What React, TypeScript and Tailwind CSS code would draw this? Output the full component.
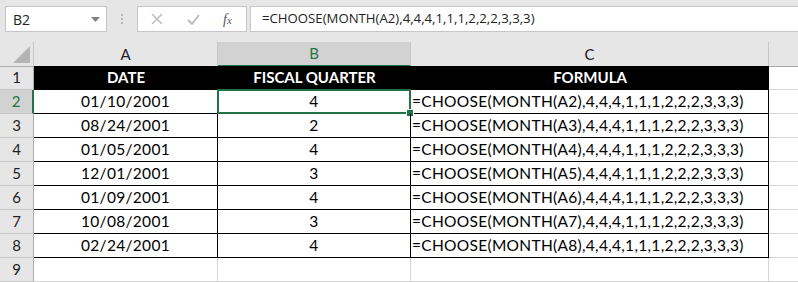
import React from "react";

const rows = [
  { date: "01/10/2001", q: "4", f: "=CHOOSE(MONTH(A2),4,4,4,1,1,1,2,2,2,3,3,3)" },
  { date: "08/24/2001", q: "2", f: "=CHOOSE(MONTH(A3),4,4,4,1,1,1,2,2,2,3,3,3)" },
  { date: "01/05/2001", q: "4", f: "=CHOOSE(MONTH(A4),4,4,4,1,1,1,2,2,2,3,3,3)" },
  { date: "12/01/2001", q: "3", f: "=CHOOSE(MONTH(A5),4,4,4,1,1,1,2,2,2,3,3,3)" },
  { date: "01/09/2001", q: "4", f: "=CHOOSE(MONTH(A6),4,4,4,1,1,1,2,2,2,3,3,3)" },
  { date: "10/08/2001", q: "3", f: "=CHOOSE(MONTH(A7),4,4,4,1,1,1,2,2,2,3,3,3)" },
  { date: "02/24/2001", q: "4", f: "=CHOOSE(MONTH(A8),4,4,4,1,1,1,2,2,2,3,3,3)" },
];

const cols = "grid grid-cols-[34px_184px_193px_358px_1fr]";
const font = { fontFamily: "Lato, 'Open Sans', sans-serif" };

function RowHead({ n, active }: { n: number; active?: boolean }) {
  return (
    <div
      className={
        active
          ? "flex items-center justify-center bg-[#d2d2d2] border-r-2 border-r-[#217346] border-b border-b-[#c6c6c6] text-[#217346] text-[15px] tracking-normal"
          : "flex items-center justify-center bg-[#e6e6e6] border-r border-r-[#ababab] border-b border-b-[#c6c6c6] text-[#222] text-[15px] tracking-normal"
      }
    >
      {n}
    </div>
  );
}

export default function App() {
  return (
    <div className="w-[798px] h-[282px] overflow-hidden bg-white text-[15px]" style={font}>
      {/* formula bar */}
      <div className="h-[42px] bg-[#e6e6e6] flex items-start pt-[6px] pl-[5px] gap-0">
        <div className="w-[102px] h-[26px] bg-white border border-[#c6c6c6] flex items-center justify-between pl-[7px] pr-[6px] text-[14px] text-[#222]" style={{ fontFamily: "'Open Sans', sans-serif" }}>
          <span>B2</span>
          <svg width="9" height="5" viewBox="0 0 9 5"><path d="M0 0h9L4.5 5z" fill="#808080" /></svg>
        </div>
        <div className="w-[30px] h-[26px] flex flex-col items-center justify-center gap-[2px]">
          <span className="w-[2px] h-[2px] bg-[#b4b4b4]" />
          <span className="w-[2px] h-[2px] bg-[#b4b4b4]" />
          <span className="w-[2px] h-[2px] bg-[#b4b4b4]" />
        </div>
        <div className="w-[110px] h-[26px] bg-white border border-[#c6c6c6] flex items-center">
          <svg className="ml-[13px]" width="12" height="12" viewBox="0 0 12 12">
            <path d="M1 1l10 10M11 1L1 11" stroke="#b8b8b8" strokeWidth="1.4" />
          </svg>
          <svg className="ml-[24px]" width="13" height="11" viewBox="0 0 13 11">
            <path d="M1 6l4 4 7-9" stroke="#b8b8b8" strokeWidth="1.8" fill="none" />
          </svg>
          <span className="ml-[23px] italic text-[14px] text-[#555]" style={{ fontFamily: "'Liberation Serif', serif" }}>
            f<span className="text-[11px]">x</span>
          </span>
        </div>
        <div className="ml-[3px] flex-1 h-[26px] bg-white border border-[#c6c6c6] border-r-0 flex items-center pl-[11px] text-[13.2px] text-[#222]" style={{ fontFamily: "'Open Sans', sans-serif" }}>
          =CHOOSE(MONTH(A2),4,4,4,1,1,1,2,2,2,3,3,3)
        </div>
      </div>

      {/* column headers */}
      <div className={`${cols} h-[24px] bg-[#e6e6e6] text-[#222]`}>
        <div className="relative border-r border-r-[#c6c6c6] border-b border-b-[#ababab]">
          <svg className="absolute right-[3px] bottom-[3px]" width="17" height="17" viewBox="0 0 17 17">
            <path d="M17 0V17H0z" fill="#b4b4b4" />
          </svg>
        </div>
        <div className="flex items-center justify-center border-r border-r-[#c6c6c6] border-b border-b-[#ababab]">A</div>
        <div className="flex items-center justify-center bg-[#d2d2d2] border-r border-r-[#c6c6c6] border-b-2 border-b-[#217346] text-[#217346]">B</div>
        <div className="flex items-center justify-center border-r border-r-[#c6c6c6] border-b border-b-[#ababab]">C</div>
        <div className="border-b border-b-[#ababab]" />
      </div>

      {/* row 1 */}
      <div className={`${cols} h-[24px]`}>
        <RowHead n={1} />
        <div className="flex items-center justify-center bg-black text-white font-bold border-b border-black">DATE</div>
        <div className="flex items-center justify-center bg-black text-white font-bold border-b border-black">FISCAL QUARTER</div>
        <div className="flex items-center justify-center bg-black text-white font-bold border-b border-black">FORMULA</div>
        <div className="border-b border-b-[#d4d4d4]" />
      </div>

      {rows.map((r, i) => (
        <div key={i} className={`${cols} h-[24px] text-black text-[15.5px] tracking-[0.3px]`}>
          <RowHead n={i + 2} active={i === 0} />
          <div className="flex items-center justify-center border-r border-b border-black">{r.date}</div>
          <div className="relative flex items-center justify-center border-r border-b border-black">
            {r.q}
            {i === 0 && (
              <div className="absolute -left-[1px] -top-[1px] -right-[1px] -bottom-[1px] border-2 border-[#217346]">
                <div className="absolute -right-[4px] -bottom-[4px] w-[6px] h-[6px] bg-[#217346] outline outline-1 outline-white" />
              </div>
            )}
          </div>
          <div className="flex items-center pl-[1px] border-r border-b border-black whitespace-nowrap">{r.f}</div>
          <div className="border-b border-b-[#d4d4d4]" />
        </div>
      ))}

      {/* row 9 */}
      <div className={`${cols} h-[24px]`}>
        <RowHead n={9} />
        <div className="border-r border-b border-[#d4d4d4]" />
        <div className="border-r border-b border-[#d4d4d4]" />
        <div className="border-r border-b border-[#d4d4d4]" />
        <div className="border-b border-[#d4d4d4]" />
      </div>
    </div>
  );
}
